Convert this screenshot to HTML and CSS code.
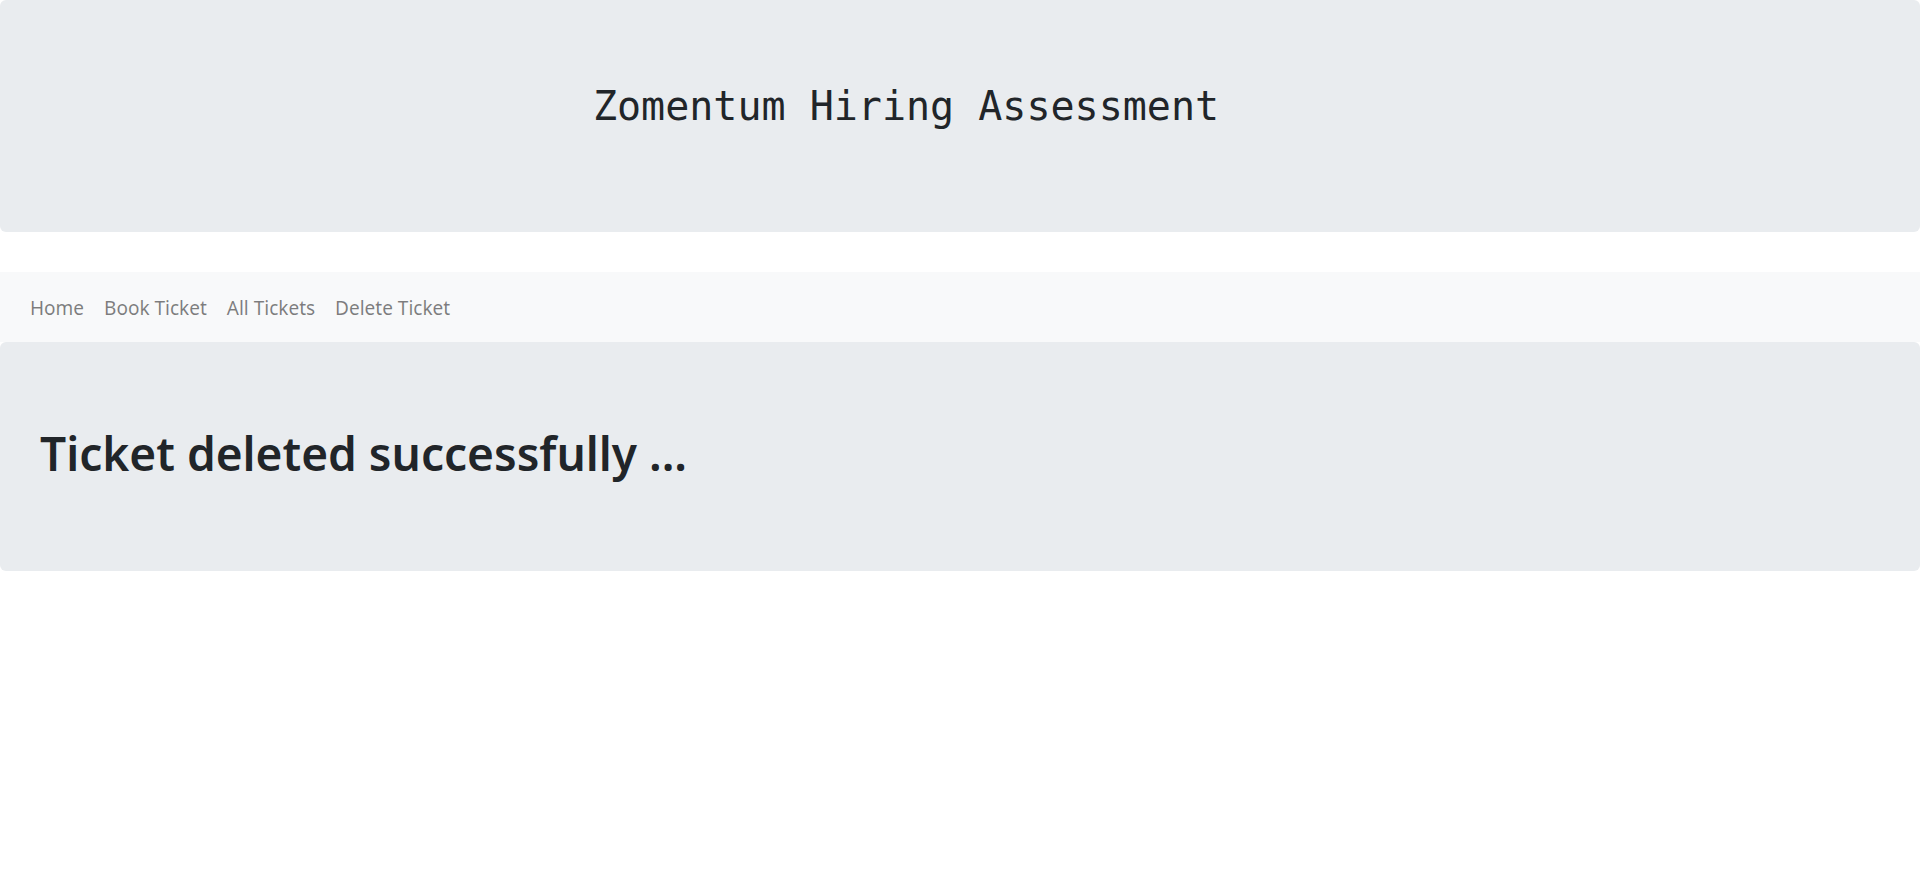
FILE: index.html
```html
<!DOCTYPE html>
<html lang="en">
<head>
<meta charset="utf-8">
<title>Zomentum Hiring Assessment</title>
<link rel="stylesheet" href="styles.css">
</head>
<body>
  <header class="jumbotron header">
    <h2 class="title">Zomentum Hiring Assessment</h2>
  </header>
  <nav class="navbar">
    <a class="nav-link" href="#">Home</a>
    <a class="nav-link" href="#">Book Ticket</a>
    <a class="nav-link" href="#">All Tickets</a>
    <a class="nav-link" href="#">Delete Ticket</a>
  </nav>
  <main class="jumbotron message">
    <h1 class="message-text">Ticket deleted successfully ...</h1>
  </main>
</body>
</html>
```
FILE: styles.css
```css
* { box-sizing: border-box; }
html, body { margin: 0; padding: 0; }
body {
  background: #fff;
  color: #212529;
  font-family: "Noto Sans", "Open Sans", sans-serif;
  font-size: 19px;
  line-height: 1.5;
}
.jumbotron {
  background: #e9ecef;
  border-radius: 6px;
}
.header {
  height: 232px;
  padding: 82px 108px 0 0;
  margin-bottom: 40px;
  text-align: center;
}
.title {
  margin: 0;
  font-family: "DejaVu Sans Mono", monospace;
  font-weight: 400;
  font-size: 40px;
  line-height: 48px;
}
.navbar {
  display: flex;
  align-items: center;
  height: 70px;
  padding: 11px 20px 9px;
  background: #f8f9fa;
}
.nav-link {
  padding: 10px;
  color: rgba(0,0,0,.5);
  text-decoration: none;
  font-size: 19px;
  line-height: 30px;
}
.message {
  height: 229px;
  padding: 81px 40px;
}
.message-text {
  margin: 0;
  font-size: 46px;
  font-weight: 600;
  line-height: 60px;
}
```
